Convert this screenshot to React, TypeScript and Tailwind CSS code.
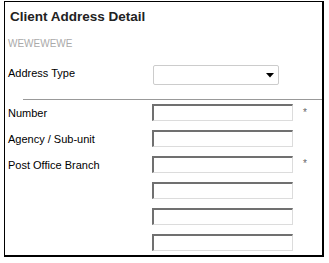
import React from "react";

const font = { fontFamily: '"Liberation Sans", Arial, sans-serif' };

function Field({ label, star }: { label?: string; star?: boolean }) {
  return (
    <div className="flex h-[26px] items-center">
      <div className="w-[147px] pl-[3px] pt-[1px] text-[11px] text-black">{label}</div>
      <div className="h-[17px] w-[141px] border-t-2 border-l-2 border-r border-b border-t-[#707070] border-l-[#707070] border-r-[#dcdcdc] border-b-[#dcdcdc] bg-white" />
      {star && <div className="ml-[10px] text-[10px] leading-none text-[#666666]">*</div>}
    </div>
  );
}

export default function App() {
  return (
    <div className="w-[329px] h-[263px] bg-white pl-[4px] pt-[1px]" style={font}>
      <div className="w-[320px] h-[256px] border-t border-l border-r-2 border-b-2 border-black bg-white flex flex-col">
        <div className="h-[29px] flex items-center pl-[5px] pt-[1px] text-[13.5px] font-bold text-[#222222]">
          Client Address Detail
        </div>
        <div className="h-[26px] flex items-center pl-[3px] text-[10px] text-[#aaaaaa]">WEWEWEWE</div>
        <div className="h-[33px] flex items-center">
          <div className="w-[148px] pl-[3px] text-[11px] text-black">Address Type</div>
          <div className="mt-[4px] h-[20px] w-[126px] rounded-[2px] border border-[#cccccc] bg-white flex items-center justify-end pr-[4px]">
            <svg width="8" height="5" viewBox="0 0 8 5">
              <path d="M0 0 L8 0 L4 4.5 Z" fill="#000" />
            </svg>
          </div>
        </div>
        <div className="mt-[9px] ml-[18px] h-px bg-[#999999]" />
        <Field label="Number" star />
        <Field label="Agency / Sub-unit" />
        <Field label="Post Office Branch" star />
        <Field />
        <Field />
        <Field />
      </div>
    </div>
  );
}
